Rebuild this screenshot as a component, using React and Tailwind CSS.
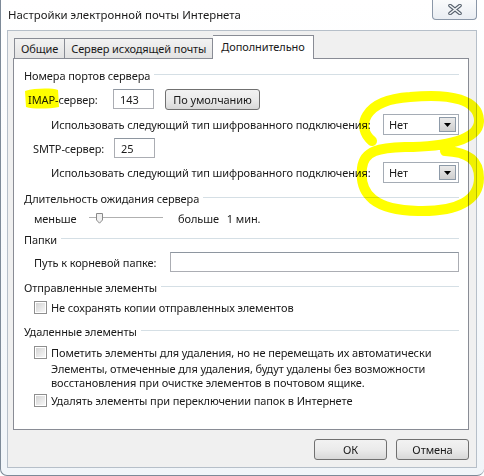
import React from 'react';

const font = { fontFamily: '"Noto Sans", "Open Sans", sans-serif' };

function Heading({ children }) {
  return (
    <div className="flex items-center h-[20px] pl-[10px] pr-[9px]">
      <span>{children}</span>
      <div className="flex-1 ml-[4px] h-[2px] border-t border-[#d5dfe5] border-b-white" />
    </div>
  );
}

function TextBox({ value, className }) {
  return (
    <div className={`h-[20px] bg-white border border-[#abadb3] border-t-[#8e96a0] flex items-center pl-[6px] ${className}`}>
      {value}
    </div>
  );
}

function Select() {
  return (
    <div className="w-[76px] h-[21px] bg-white border border-[#a5acb5] flex items-center pl-[5px] pr-[2px] relative">
      <span>Нет</span>
      <div className="ml-auto w-[17px] h-[15px] border border-[#8d9aa8] bg-gradient-to-b from-[#eaeaea] to-[#cfcfcf] flex items-center justify-center">
        <svg width="7" height="4" viewBox="0 0 7 4"><path d="M0 0h7L3.5 4z" fill="#000" /></svg>
      </div>
    </div>
  );
}

function Checkbox() {
  return (
    <div className="w-[13px] h-[13px] border border-[#8f8f8f] bg-white p-[1px] shrink-0">
      <div className="w-full h-full bg-gradient-to-br from-[#d4d4d4] to-[#f7f7f7]" />
    </div>
  );
}

function WinButton({ children, className }) {
  return (
    <div className={`h-[21px] rounded-[3px] border border-[#707070] bg-gradient-to-b from-[#f2f2f2] via-[#ebebeb] to-[#d8d8d8] flex items-center justify-center ${className}`}>
      {children}
    </div>
  );
}

export default function App() {
  return (
    <div className="w-[484px] h-[476px] relative overflow-hidden bg-white text-[11px] tracking-[-0.1px] text-[#1a1a1a] leading-none whitespace-nowrap" style={font}>
      <div className="absolute inset-0 rounded-b-[7px] border-l border-b border-[#7d8a98] bg-gradient-to-b from-[#ffffff] to-[#f1f5f9]" />

      <div className="relative">
        {/* title bar */}
        <div className="h-[30px] flex items-center pl-[8px] pb-[1px] text-[11.4px] tracking-normal">
          Настройки электронной почты Интернета
        </div>
        <div className="absolute top-0 right-[7px] w-[45px] h-[20px] rounded-b-[4px] border border-t-0 border-[#8a97a8] bg-gradient-to-b from-[#fafbfc] to-[#e9edf2] flex items-center justify-center">
          <svg width="14" height="11" viewBox="0 0 14 11">
            <path d="M2 1.5 L12 9.5 M12 1.5 L2 9.5" stroke="#56606c" strokeWidth="3.6" strokeLinecap="round" />
            <path d="M2 1.5 L12 9.5 M12 1.5 L2 9.5" stroke="#f4f6f8" strokeWidth="1.6" strokeLinecap="round" />
          </svg>
        </div>

        {/* client area */}
        <div className="mx-[7px] h-[438px] bg-[#f0f0f0] border border-[#b6bfc9] pl-[5px] pr-[7px] pt-[4px]">
          {/* tabs */}
          <div className="flex items-end h-[23px] pl-[1px] relative z-10">
            <div className="h-[20px] px-[6px] flex items-center border border-b-0 border-[#898c95] bg-gradient-to-b from-[#f2f2f2] to-[#e3e3e3]">Общие</div>
            <div className="h-[20px] px-[6px] flex items-center border border-b-0 border-l-0 border-[#898c95] bg-gradient-to-b from-[#f2f2f2] to-[#e3e3e3]">Сервер исходящей почты</div>
            <div className="h-[24px] px-[8px] pb-[3px] flex items-center border border-b-0 border-l-0 border-[#898c95] bg-white -mb-[1px]">Дополнительно</div>
          </div>

          {/* tab panel */}
          <div className="w-[456px] h-[372px] border border-[#898c95] bg-white pt-[6px]">
            <Heading>Номера портов сервера</Heading>

            <div className="flex items-center h-[20px] mt-[4px] pl-[14px]">
              <span className="w-[85px]">IMAP-сервер:</span>
              <TextBox value="143" className="w-[41px]" />
              <WinButton className="ml-[11px] w-[95px]">По умолчанию</WinButton>
            </div>

            <div className="flex items-center h-[21px] mt-[5px] pl-[37px] pr-[9px]">
              <span>Использовать следующий тип шифрованного подключения:</span>
              <div className="ml-auto"><Select /></div>
            </div>

            <div className="flex items-center h-[20px] mt-[3px] pl-[19px]">
              <span className="w-[81px]">SMTP-сервер:</span>
              <TextBox value="25" className="w-[41px]" />
            </div>

            <div className="flex items-center h-[21px] mt-[4px] pl-[37px] pr-[9px]">
              <span>Использовать следующий тип шифрованного подключения:</span>
              <div className="ml-auto"><Select /></div>
            </div>

            <div className="mt-[5px]"><Heading>Длительность ожидания сервера</Heading></div>

            <div className="flex items-center h-[20px] pl-[20px]">
              <span className="w-[55px]">меньше</span>
              <div className="relative w-[74px] h-[12px] flex items-center">
                <div className="w-full h-[2px] border-t border-[#b0b0b0] border-b border-b-white" />
                <svg className="absolute left-[7px] top-[1px]" width="7" height="11" viewBox="0 0 7 11">
                  <path d="M0.5 0.5h6v6.5l-3 3.2-3-3.2z" fill="#f0f0f0" stroke="#8a8a8a" />
                </svg>
              </div>
              <span className="ml-[15px]">больше</span>
              <span className="ml-[8px]">1 мин.</span>
            </div>

            <div className="mt-[1px]"><Heading>Папки</Heading></div>

            <div className="flex items-center h-[20px] mt-[3px] pl-[20px] pr-[9px]">
              <span className="w-[136px]">Путь к корневой папке:</span>
              <TextBox value="" className="flex-1" />
            </div>

            <div className="mt-[5px]"><Heading>Отправленные элементы</Heading></div>

            <div className="flex items-center h-[20px] pl-[20px] gap-[4px]">
              <Checkbox />
              <span>Не сохранять копии отправленных элементов</span>
            </div>

            <div className="mt-[4px]"><Heading>Удаленные элементы</Heading></div>

            <div className="flex items-center h-[20px] mt-[1px] pl-[20px] gap-[4px]">
              <Checkbox />
              <span>Пометить элементы для удаления, но не перемещать их автоматически</span>
            </div>

            <div className="pl-[37px] leading-[14px]">
              <div>Элементы, отмеченные для удаления, будут удалены без возможности</div>
              <div>восстановления при очистке элементов в почтовом ящике.</div>
            </div>

            <div className="flex items-center h-[20px] pl-[20px] gap-[4px]">
              <Checkbox />
              <span>Удалять элементы при переключении папок в Интернете</span>
            </div>
          </div>

          {/* dialog buttons */}
          <div className="flex justify-end gap-[9px] mt-[9px]">
            <WinButton className="w-[73px]">ОК</WinButton>
            <WinButton className="w-[73px]">Отмена</WinButton>
          </div>
        </div>
      </div>

      {/* yellow marker annotations */}
      <svg className="absolute inset-0 pointer-events-none mix-blend-multiply" width="484" height="476" viewBox="0 0 484 476">
        <path d="M25 91 C 35 88, 52 88, 58 90 L 59 107 C 48 109, 32 109, 26 107 Z" fill="#ffff00" />
        <path
          d="M372 141 C 356 128, 362 100, 410 97 C 452 93, 478 100, 479 120 C 480 140, 445 147, 405 147 C 380 148, 364 150, 362 168 C 359 195, 375 210, 418 211 C 458 212, 479 200, 479 178 C 479 160, 468 152, 445 151"
          fill="none" stroke="#ffff00" strokeWidth="10" strokeLinecap="round" strokeLinejoin="round"
        />
      </svg>
    </div>
  );
}
